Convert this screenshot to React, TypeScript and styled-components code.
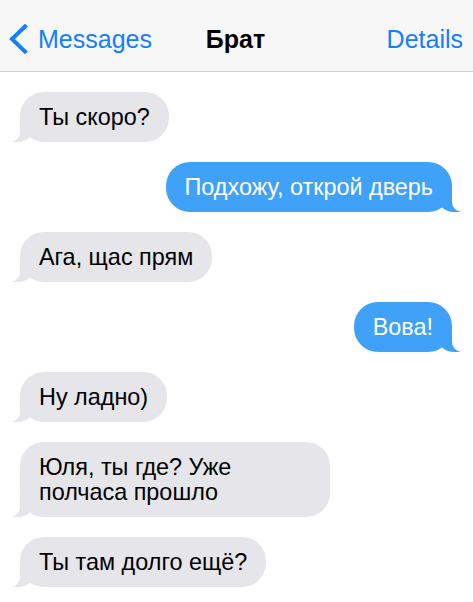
import styled, { createGlobalStyle, css } from "styled-components";

const colors = {
  header: "#f7f7f7",
  border: "#d0d0d0",
  link: "#157efb",
  incoming: "#e5e5ea",
  outgoing: "#3fa1f7",
  white: "#ffffff",
  text: "#000000",
};

const GlobalStyle = createGlobalStyle`
  body {
    margin: 0;
    background: ${colors.white};
    font-family: "Liberation Sans", Arial, sans-serif;
  }
`;

const Screen = styled.div`
  width: 473px;
  min-height: 602px;
  background: ${colors.white};
  overflow: hidden;
`;

const NavBar = styled.header`
  box-sizing: border-box;
  height: 72px;
  display: grid;
  grid-template-columns: 1fr auto 1fr;
  align-items: center;
  padding: 7px 10px 0 8px;
  background: ${colors.header};
  border-bottom: 1px solid ${colors.border};
  font-size: 25px;
`;

const BackButton = styled.a`
  display: flex;
  align-items: center;
  gap: 10px;
  color: ${colors.link};

  svg {
    display: block;
  }
`;

const Title = styled.strong`
  font-weight: 700;
  color: ${colors.text};
`;

const NavAction = styled.a`
  justify-self: end;
  color: ${colors.link};
`;

const Thread = styled.main`
  display: flex;
  flex-direction: column;
  gap: 20px;
  padding: 20px 21px 20px 20px;
`;

const Bubble = styled.div<{ $mine?: boolean }>`
  position: relative;
  max-width: 272px;
  padding: 12.5px 19px;
  border-radius: 24px;
  font-size: 23.4px;
  line-height: 25px;

  &::before,
  &::after {
    content: "";
    position: absolute;
    bottom: 0;
    height: 22px;
  }

  ${({ $mine }) =>
    $mine
      ? css`
          align-self: flex-end;
          background: ${colors.outgoing};
          color: ${colors.white};

          &::before {
            right: -8px;
            width: 22px;
            background: ${colors.outgoing};
            border-bottom-left-radius: 16px 14px;
          }

          &::after {
            right: -12px;
            width: 12px;
            background: ${colors.white};
            border-bottom-left-radius: 10px;
          }
        `
      : css`
          align-self: flex-start;
          background: ${colors.incoming};
          color: ${colors.text};

          &::before {
            left: -8px;
            width: 22px;
            background: ${colors.incoming};
            border-bottom-right-radius: 16px 14px;
          }

          &::after {
            left: -12px;
            width: 12px;
            background: ${colors.white};
            border-bottom-right-radius: 10px;
          }
        `}
`;

const messages = [
  { text: "Ты скоро?" },
  { text: "Подхожу, открой дверь", mine: true },
  { text: "Ага, щас прям" },
  { text: "Вова!", mine: true },
  { text: "Ну ладно)" },
  { text: "Юля, ты где? Уже полчаса прошло" },
  { text: "Ты там долго ещё?" },
];

export default function App() {
  return (
    <Screen>
      <GlobalStyle />
      <NavBar>
        <BackButton>
          <svg width="20" height="30" viewBox="0 0 20 30">
            <polyline
              points="17,2.5 4,15 17,27.5"
              fill="none"
              stroke={colors.link}
              strokeWidth="4"
              strokeLinecap="square"
            />
          </svg>
          Messages
        </BackButton>
        <Title>Брат</Title>
        <NavAction>Details</NavAction>
      </NavBar>
      <Thread>
        {messages.map((m, i) => (
          <Bubble key={i} $mine={m.mine}>
            {m.text}
          </Bubble>
        ))}
      </Thread>
    </Screen>
  );
}
